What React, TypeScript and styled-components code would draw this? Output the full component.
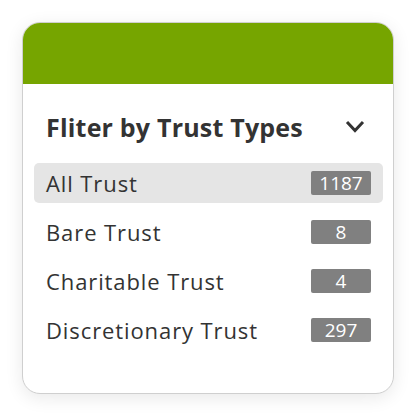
import { useState } from "react";
import styled, { createGlobalStyle } from "styled-components";

const trustTypes = [
  { label: "All Trust", count: 1187 },
  { label: "Bare Trust", count: 8 },
  { label: "Charitable Trust", count: 4 },
  { label: "Discretionary Trust", count: 297 },
];

const GlobalStyle = createGlobalStyle`
  body {
    margin: 0;
    background: #ffffff;
    font-family: "Open Sans", Lato, sans-serif;
  }
`;

export default function App() {
  const [active, setActive] = useState("All Trust");

  return (
    <>
      <GlobalStyle />
      <Page>
        <Card>
          <Header />
          <Body>
            <TitleRow>
              <Title>Fliter by Trust Types</Title>
              <svg width="20" height="13" viewBox="0 0 20 13">
                <path
                  d="M2 2 L10 10.5 L18 2"
                  fill="none"
                  stroke="#333"
                  strokeWidth="3"
                />
              </svg>
            </TitleRow>
            <List>
              {trustTypes.map((t) => (
                <Row
                  key={t.label}
                  $active={active === t.label}
                  onClick={() => setActive(t.label)}
                >
                  <Label>{t.label}</Label>
                  <Count>{t.count}</Count>
                </Row>
              ))}
            </List>
          </Body>
        </Card>
      </Page>
    </>
  );
}

const Page = styled.div`
  width: 417px;
  height: 417px;
  padding: 22px 23px 0 22px;
  box-sizing: border-box;
`;

const Card = styled.div`
  width: 372px;
  height: 372px;
  box-sizing: border-box;
  border: 1px solid #cfcfcf;
  border-radius: 18px;
  overflow: hidden;
  background: #fff;
  box-shadow: 0 4px 18px rgba(0, 0, 0, 0.09);
  display: flex;
  flex-direction: column;
`;

const Header = styled.div`
  height: 61px;
  background: #76a500;
`;

const Body = styled.div`
  padding: 0 10px 0 11px;
`;

const TitleRow = styled.div`
  height: 79px;
  display: flex;
  align-items: center;
  justify-content: space-between;
  padding: 6px 18px 0 12px;
  box-sizing: border-box;
  color: #333;
`;

const Title = styled.h2`
  margin: 0;
  font-size: 25px;
  font-weight: 700;
  letter-spacing: 0.2px;
  color: #333;
`;

const List = styled.div`
  display: flex;
  flex-direction: column;
  gap: 9px;
`;

const Row = styled.div<{ $active: boolean }>`
  height: 40px;
  display: flex;
  align-items: center;
  justify-content: space-between;
  padding: 0 12px 0 12px;
  border-radius: 5px;
  background: ${({ $active }) => ($active ? "#e5e5e5" : "transparent")};
  cursor: pointer;
`;

const Label = styled.span`
  font-size: 22px;
  font-weight: 500;
  letter-spacing: 0.9px;
  color: #333;
`;

const Count = styled.span`
  width: 60px;
  height: 24px;
  line-height: 24px;
  background: #808080;
  border-radius: 2px;
  color: #fff;
  font-size: 19px;
  font-weight: 500;
  text-align: center;
`;
